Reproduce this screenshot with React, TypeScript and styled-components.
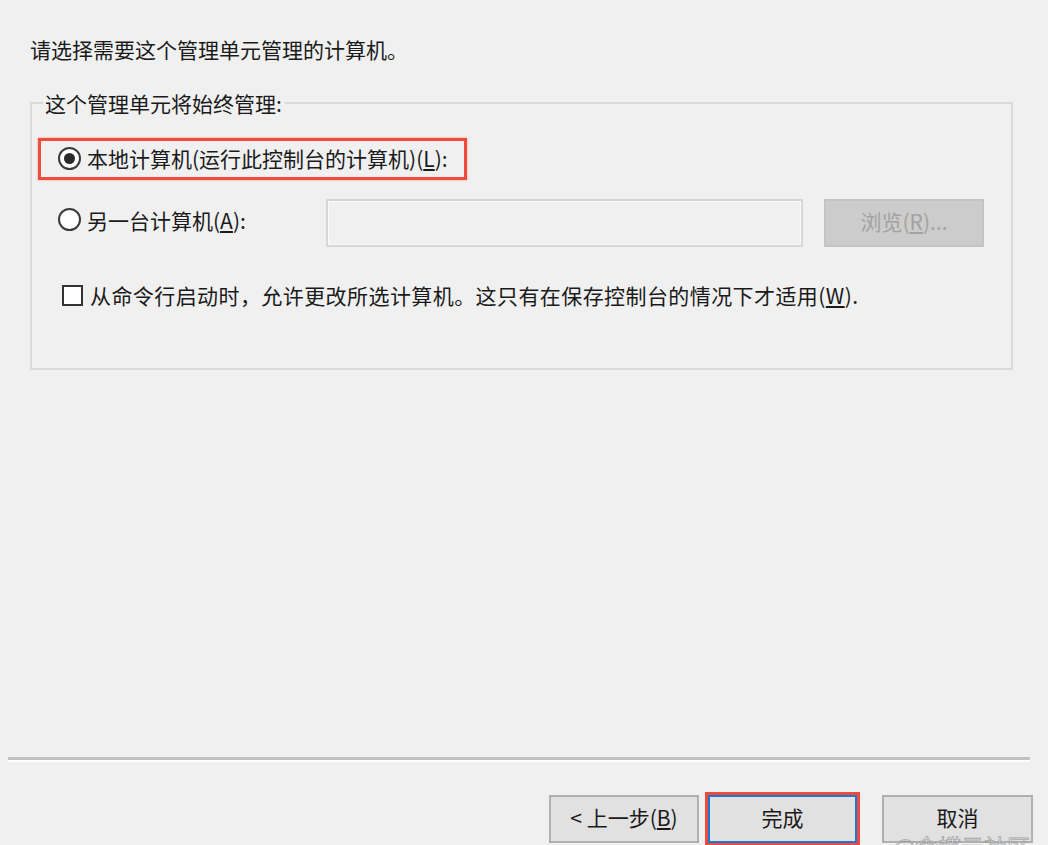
import React from "react";
import styled, { createGlobalStyle } from "styled-components";

const GlobalStyle = createGlobalStyle`
  html, body {
    margin: 0;
    padding: 0;
    background: #f0f0f0;
    overflow: hidden;
  }
  body {
    font-family: "Noto Sans CJK SC", "Noto Sans", sans-serif;
    color: #1a1a1a;
  }
`;

const Page = styled.div`
  position: relative;
  width: 1048px;
  height: 845px;
  display: flex;
  flex-direction: column;
  background: #f0f0f0;
  font-size: 21px;
  overflow: hidden;
`;

const Title = styled.div`
  padding: 35px 0 0 30px;
  line-height: 28px;
  height: 28px;
`;

const GroupBox = styled.fieldset`
  margin: 28px 0 0 30px;
  width: 983px;
  box-sizing: border-box;
  min-width: 0;
  padding: 0 0 59px 0;
  border: 2px solid #dadada;
  display: flex;
  flex-direction: column;
  align-items: flex-start;
`;

const Legend = styled.legend`
  margin-left: 11px;
  padding: 0 3px 0 2px;
  line-height: 24px;
  height: 24px;
`;

const HighlightRow = styled.div`
  margin: 23px 0 0 6px;
  height: 42px;
  box-sizing: border-box;
  border: 3px solid #ef4a3b;
  box-shadow: 0 0 2px rgba(239, 74, 59, 0.5);
  padding: 0 16px 2px 17px;
  display: flex;
  align-items: center;
`;

const OptionRow = styled.div`
  margin-top: 19px;
  padding-left: 26px;
  height: 48px;
  display: flex;
  align-items: center;
`;

const RadioLabel = styled.label<{ $width?: number; $lift?: number }>`
  display: flex;
  align-items: center;
  gap: 6px;
  line-height: 28px;
  white-space: nowrap;
  margin-bottom: ${(p) => p.$lift ?? 0}px;
  ${(p) => (p.$width ? `width: ${p.$width}px;` : "")}
`;

const RadioCircle = styled.span<{ $checked?: boolean }>`
  width: 23px;
  height: 23px;
  box-sizing: border-box;
  border-radius: 50%;
  border: 2px solid #3a3a3a;
  background: #ffffff;
  display: inline-flex;
  align-items: center;
  justify-content: center;
  flex: none;
  &::after {
    content: "";
    width: 11px;
    height: 11px;
    border-radius: 50%;
    background: #2a2a2a;
    display: ${(p) => (p.$checked ? "block" : "none")};
  }
`;

const Key = styled.u`
  text-decoration: underline;
  text-underline-offset: 2px;
`;

const PathInput = styled.div`
  width: 477px;
  height: 48px;
  box-sizing: border-box;
  border: 2px solid #d6d6d6;
  box-shadow: inset 0 0 0 1px #fafafa;
  background: #f0f0f0;
`;

const BrowseButton = styled.div`
  margin-left: 21px;
  width: 160px;
  height: 48px;
  box-sizing: border-box;
  border: 2px solid #c4c4c4;
  background: #cccccc;
  color: #a2a2a2;
  display: flex;
  align-items: center;
  justify-content: center;
  padding-bottom: 4px;
`;

const CheckRow = styled.label`
  margin-top: 34px;
  padding-left: 30px;
  height: 28px;
  display: flex;
  align-items: center;
  gap: 7px;
  white-space: nowrap;
  line-height: 28px;
`;

const CheckText = styled.span`
  letter-spacing: 0.42px;
`;

const CheckBox = styled.span`
  width: 21px;
  height: 21px;
  box-sizing: border-box;
  border: 2px solid #333333;
  background: #ffffff;
  flex: none;
`;

const Spacer = styled.div`
  flex: 1;
`;

const Separator = styled.div`
  margin: 0 18px 0 8px;
  height: 3px;
  background: #c0c0c0;
  border-bottom: 2px solid #ffffff;
`;

const ButtonBar = styled.div`
  margin: 33px 15px 2px 0;
  display: flex;
  justify-content: flex-end;
  align-items: center;
`;

const Button = styled.div<{ $width: number; $primary?: boolean; $gap?: number }>`
  width: ${(p) => p.$width}px;
  height: 48px;
  box-sizing: border-box;
  margin-left: ${(p) => p.$gap ?? 0}px;
  padding-bottom: 5px;
  background: #e1e1e1;
  border: 2px solid ${(p) => (p.$primary ? "#1a78d4" : "#b0b0b0")};
  outline: ${(p) => (p.$primary ? "3px solid #ef4a3b" : "none")};
  color: #1a1a1a;
  display: flex;
  align-items: center;
  justify-content: center;
  line-height: 28px;
`;

const Watermark = styled.div`
  position: absolute;
  right: 18px;
  bottom: -15px;
  font-size: 23px;
  line-height: 28px;
  color: rgba(255, 255, 255, 0.55);
  -webkit-text-stroke: 0.8px rgba(130, 130, 130, 0.7);
  pointer-events: none;
`;

export default function App() {
  return (
    <Page>
      <GlobalStyle />
      <Title>请选择需要这个管理单元管理的计算机。</Title>
      <GroupBox>
        <Legend>这个管理单元将始终管理:</Legend>
        <HighlightRow>
          <RadioLabel>
            <RadioCircle $checked />
            <span>
              本地计算机(运行此控制台的计算机)(<Key>L</Key>):
            </span>
          </RadioLabel>
        </HighlightRow>
        <OptionRow>
          <RadioLabel $width={268} $lift={7}>
            <RadioCircle />
            <span>
              另一台计算机(<Key>A</Key>):
            </span>
          </RadioLabel>
          <PathInput />
          <BrowseButton>
            <span>
              浏览(<Key>R</Key>)...
            </span>
          </BrowseButton>
        </OptionRow>
        <CheckRow>
          <CheckBox />
          <CheckText>
            从命令行启动时，允许更改所选计算机。这只有在保存控制台的情况下才适用(<Key>W</Key>).
          </CheckText>
        </CheckRow>
      </GroupBox>
      <Spacer />
      <Separator />
      <ButtonBar>
        <Button $width={150}>
          <span>
            &lt; 上一步(<Key>B</Key>)
          </span>
        </Button>
        <Button $width={149} $primary $gap={9}>
          完成
        </Button>
        <Button $width={151} $gap={25}>
          取消
        </Button>
      </ButtonBar>
      <Watermark>@金蝶云社区</Watermark>
    </Page>
  );
}
